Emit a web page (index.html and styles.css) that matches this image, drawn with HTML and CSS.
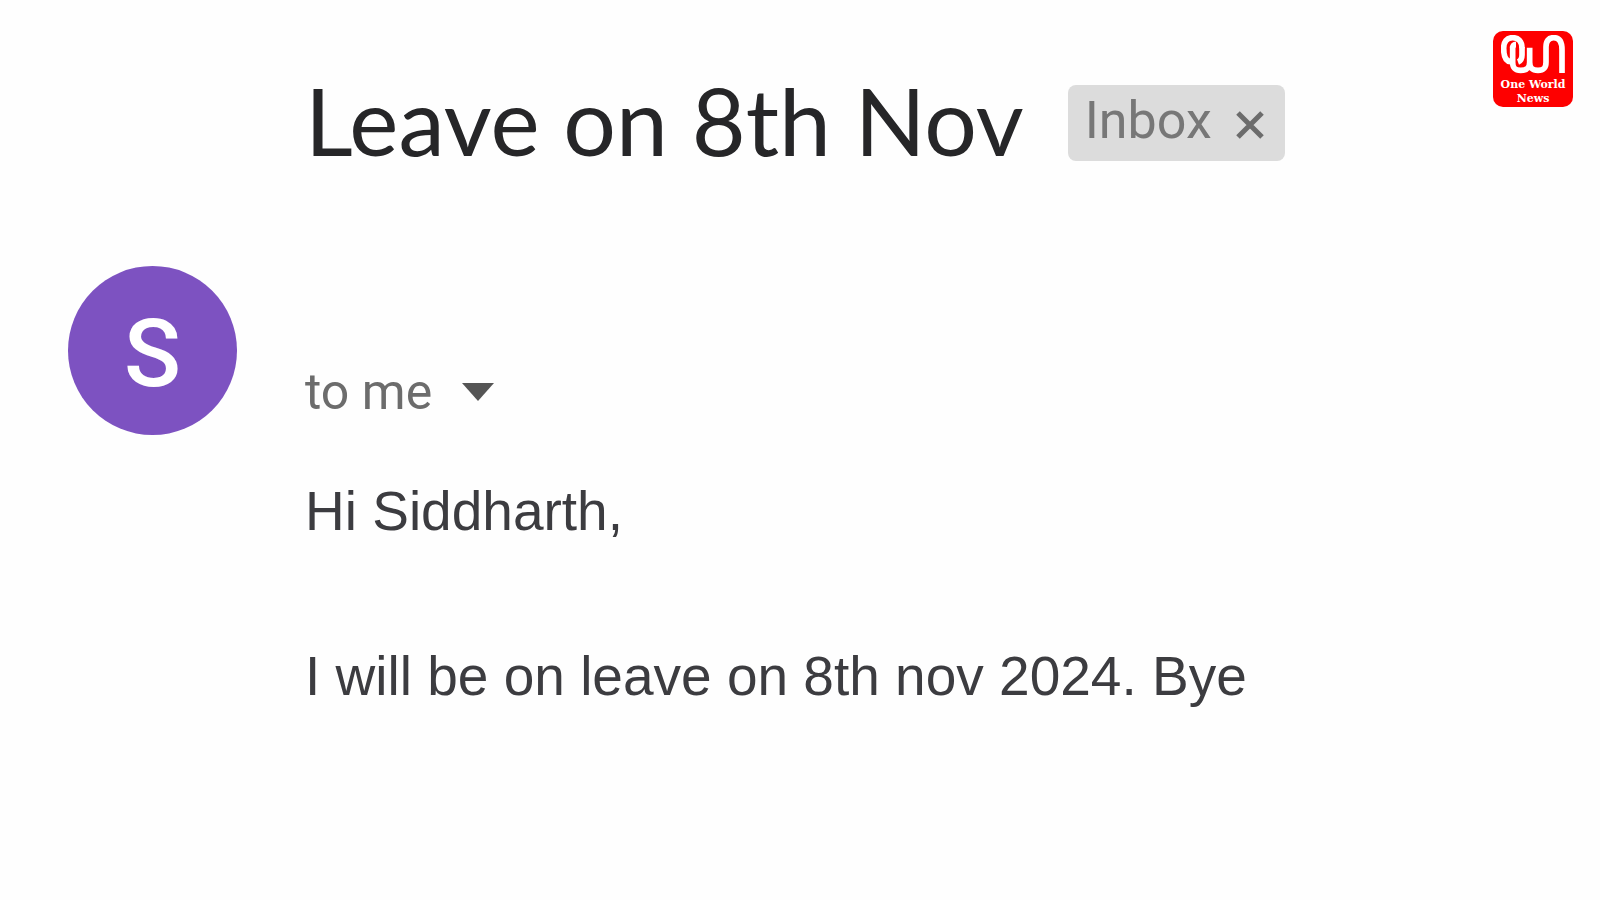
FILE: index.html
```
<!DOCTYPE html>
<html lang="en">

<head>
  <meta charset="UTF-8">
  <meta name="viewport" content="width=device-width, initial-scale=1.0">
  <title>Leave on 8th Nov</title>
  <link rel="stylesheet" href="styles.css">
</head>

<body>
  <main class="mail">
    <header class="subject">
      <h1>Leave on 8th Nov</h1>
      <div class="label">
        <span>Inbox</span>
        <button type="button" class="remove" aria-label="Remove label">
          <svg width="28" height="28" viewBox="0 0 28 28">
            <path d="M2 2L26 26M26 2L2 26" />
          </svg>
        </button>
      </div>
    </header>
    <div class="avatar">S</div>
    <section class="message">
      <div class="to">
        <span>to me</span>
        <button type="button" class="details" aria-label="Show details">
          <svg width="32" height="18" viewBox="0 0 32 18">
            <path d="M0 0H32L16 18Z" />
          </svg>
        </button>
      </div>
      <p>Hi Siddharth,</p>
      <p>I will be on leave on 8th nov 2024. Bye</p>
    </section>
  </main>
  <div class="logo">
    <svg width="64" height="39" viewBox="63 44 192 117">
      <path d="M126 84C126 62 114 52 98 52C80 52 71 64 71 84C71 108 78 123 92 124" />
      <path d="M98 78V126C98 144 105 150 122 150C140 150 149 143 149 126V82V126C149 144 158 150 174 150C191 150 198 143 198 126V80C198 62 206 52 221 52C238 52 246 64 246 88V158" />
      <path d="M98 82C98 76 102 72 108 72M126 80V104C126 114 122 122 114 125" />
    </svg>
    <span>One World</span>
    <span>News</span>
  </div>
</body>

</html>
```

FILE: styles.css
```
body {
  margin: 0;
  background: #fefefe;
  color: #3c3c40;
  font-family: "Liberation Sans", Arial, sans-serif;
}

button {
  border: 0;
  padding: 0;
  background: none;
  cursor: pointer;
}

svg {
  display: block;
}

.mail {
  display: grid;
  grid-template-columns: 169px 1fr;
  column-gap: 68px;
  padding: 68px 68px 0;
}

.subject {
  grid-column: 2;
  display: flex;
  align-items: center;
  gap: 44px;
  height: 110px;
}

.subject h1 {
  margin: 0;
  padding-bottom: 6px;
  color: #262628;
  font: 400 93px/104px Lato, sans-serif;
}

.label {
  display: flex;
  align-items: center;
  gap: 24px;
  height: 76px;
  padding: 0 21px 0 17px;
  border-radius: 8px;
  background: #dcdcdc;
  color: #777;
  font: 52px/72px Roboto, sans-serif;
}

.label span {
  padding-bottom: 4px;
}

.remove {
  padding-top: 4px;
}

.remove path {
  fill: none;
  stroke: #6c6c6c;
  stroke-width: 5;
}

.avatar {
  width: 169px;
  height: 169px;
  margin-top: 88px;
  border-radius: 50%;
  background: #7d52c1;
  color: #fff;
  font: 500 94px/176px Roboto, sans-serif;
  text-align: center;
}

.message {
  padding-top: 180px;
}

.to {
  display: flex;
  align-items: center;
  gap: 30px;
  height: 68px;
  color: #6c6c6c;
  font: 50px/68px Roboto, sans-serif;
}

.details path {
  fill: #555;
}

.message p {
  margin: 0 0 83px;
  font-size: 55px;
  line-height: 82px;
}

.to + p {
  padding-top: 44px;
}

/* channel logo over the top right corner */
.logo {
  position: absolute;
  top: 31px;
  right: 27px;
  display: flex;
  flex-direction: column;
  align-items: center;
  box-sizing: border-box;
  width: 80px;
  height: 76px;
  padding-top: 4px;
  border-radius: 10px;
  background: #fe0000;
  color: #fff;
  font: bold 11px/14px "DejaVu Serif", serif;
}

.logo svg {
  margin-bottom: 4px;
}

.logo path {
  fill: none;
  stroke: #fff;
  stroke-width: 17;
}
```
